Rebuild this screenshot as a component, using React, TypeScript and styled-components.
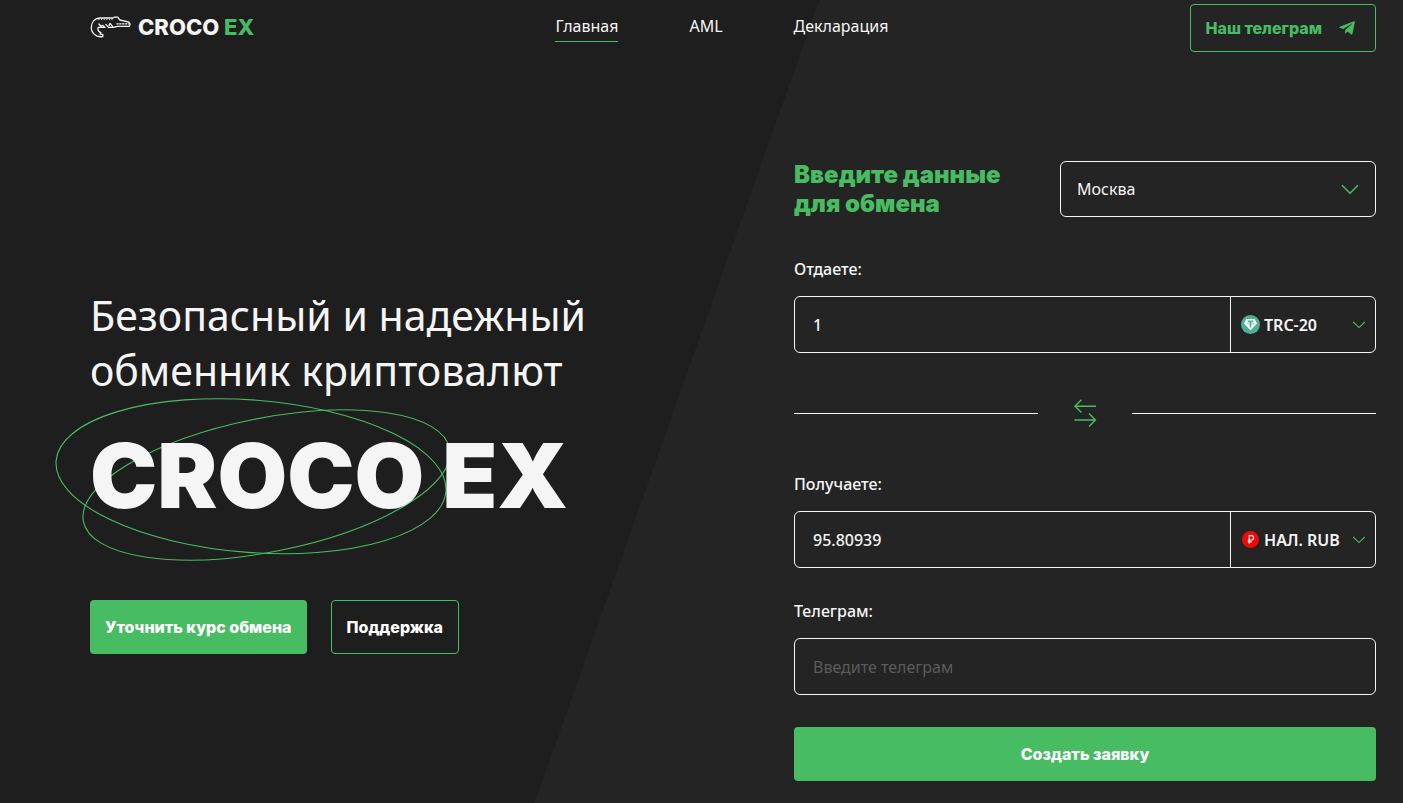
import React, { useState } from 'react';
import styled, { createGlobalStyle, css } from 'styled-components';
import { FaTelegramPlane } from 'react-icons/fa';

const green = '#47bc62';
const light = '#f5f5f5';
const dark = '#1e1e1e';
const panel = '#242424';
const displayFont = '"Inter", "Liberation Sans", sans-serif';
const bodyFont = '"Noto Sans", "Open Sans", sans-serif';

const GlobalStyle = createGlobalStyle`
  *, *::before, *::after { box-sizing: border-box; }
  body {
    margin: 0;
    background: ${dark};
    color: ${light};
    font-family: ${bodyFont};
    font-size: 16px;
    line-height: 24px;
  }
  button, input, select { font: inherit; color: inherit; }
`;

const Page = styled.div`
  min-height: 100vh;
  padding: 4px 27px 22px 90px;
  background: ${panel};
  position: relative;
  isolation: isolate;

  &::before {
    content: '';
    position: absolute;
    inset: 0;
    z-index: -1;
    background: ${dark};
    clip-path: polygon(0 0, 58.4% 0, 38.1% 100%, 0 100%);
  }
`;

const Header = styled.header`
  display: flex;
  align-items: center;
  justify-content: space-between;
  min-height: 48px;
`;

const Brand = styled.a`
  display: flex;
  align-items: center;
  gap: 7px;
  padding-bottom: 2px;
  color: ${light};
  font: 800 22px/28px ${displayFont};
  text-decoration: none;
`;

const Accent = styled.span`
  color: ${green};
`;

const Nav = styled.nav`
  display: flex;
  gap: 71px;
`;

const NavLink = styled.a<{ $active?: boolean }>`
  padding-bottom: 3px;
  color: ${light};
  text-decoration: none;
  border-bottom: 1px solid ${p => (p.$active ? green : 'transparent')};
`;

const buttonBase = css`
  display: inline-flex;
  align-items: center;
  justify-content: center;
  gap: 16px;
  border-radius: 4px;
  padding: 0 15px;
  font: 800 16px/24px ${displayFont};
  text-decoration: none;
  cursor: pointer;
`;

const PrimaryButton = styled.button`
  ${buttonBase}
  min-height: 54px;
  border: 0;
  background: ${green};
  color: #fff;
`;

const OutlineButton = styled.button`
  ${buttonBase}
  min-height: 54px;
  border: 1px solid ${green};
  background: transparent;
  color: #fff;
`;

const TelegramLink = styled.a`
  ${buttonBase}
  min-height: 48px;
  padding-right: 19px;
  border: 1px solid ${green};
  color: ${green};
`;

const Hero = styled.main`
  display: grid;
  grid-template-columns: 704fr 582fr;
  align-items: center;
  padding-top: 108px;
`;

const Intro = styled.section`
  display: flex;
  flex-direction: column;
  align-items: flex-start;
`;

const Lead = styled.p`
  margin: 0;
  font-size: 41px;
  line-height: 55px;
`;

const Title = styled.h1`
  position: relative;
  margin: 32px 0 78px;
  font: 900 90px/92px ${displayFont};
`;

const Rings = styled.svg`
  position: absolute;
  left: -36px;
  top: -34px;
  z-index: -1;
`;

const Actions = styled.div`
  display: flex;
  gap: 24px;
`;

const Form = styled.form`
  display: flex;
  flex-direction: column;
`;

const FormTop = styled.div`
  display: flex;
  align-items: center;
  justify-content: space-between;
  margin-bottom: 39px;
`;

const FormTitle = styled.h2`
  margin: 0;
  color: ${green};
  font: 900 24px/29px ${displayFont};
`;

const Label = styled.label`
  margin-bottom: 15px;
  font-weight: 500;
`;

const CitySelect = styled.div`
  position: relative;
  width: 316px;
`;

const Select = styled.select<{ $compact?: boolean }>`
  appearance: none;
  width: 100%;
  height: ${p => (p.$compact ? '100%' : '56px')};
  padding: ${p => (p.$compact ? '0 24px 0 33px' : '0 40px 0 16px')};
  border: ${p => (p.$compact ? '0' : `1px solid ${light}`)};
  border-radius: 6px;
  background: transparent;
  font-weight: ${p => (p.$compact ? 600 : 400)};
  outline: none;

  option { background: ${panel}; }
`;

const Chevron = styled.svg<{ $compact?: boolean }>`
  position: absolute;
  top: 0;
  bottom: 0;
  right: ${p => (p.$compact ? '9px' : '17px')};
  margin: auto 0;
  pointer-events: none;
`;

const CoinIcon = styled.svg`
  position: absolute;
  top: 0;
  bottom: 0;
  left: 10px;
  margin: auto 0;
  pointer-events: none;
`;

const Field = styled.div`
  display: flex;
  height: 57px;
  border: 1px solid ${light};
  border-radius: 6px;
`;

const Input = styled.input`
  flex: 1;
  min-width: 0;
  padding: 0 18px;
  border: 0;
  background: transparent;
  font-weight: 500;
  outline: none;

  &::placeholder { color: #5b5b5b; font-weight: 400; opacity: 1; }
`;

const Currency = styled.div`
  position: relative;
  width: 145px;
  border-left: 1px solid ${light};
`;

const SwapRow = styled.div`
  display: flex;
  align-items: center;
  gap: 35px;
  margin: 46px 0 45px;
`;

const Line = styled.span`
  flex: 1;
  height: 1px;
  background: ${light};
`;

const SwapButton = styled.button`
  display: flex;
  padding: 0;
  border: 0;
  background: transparent;
  cursor: pointer;
`;

const TelegramField = styled.div`
  display: flex;
  flex-direction: column;
  margin: 31px 0 32px;
`;

function Crocodile() {
  return (
    <svg width="41" height="22" viewBox="-0.5 -1 41 22" fill="none" stroke={light} strokeWidth="1.3" strokeLinejoin="round" strokeLinecap="round" aria-hidden="true">
      <path d="M12.2 19.6C6.5 20.6 .8 16.6 .8 10.6 .8 4.6 4.6 1.3 9.5 1H22.4L24.2 .2H27.2L29.4 3 38.6 5.2 39.6 7 38.8 9.4H27L22.6 10.4H18L15.4 7.4M12.2 19.6 12.4 17.6 9.6 17.2 10.4 15.6C8 15 7 12.6 7.6 10.4H14.4L12.4 8.4 10.4 9.2 8.4 7M22.6 10.4 19.6 6.4 18.6 8.4" />
      <path d="M26.4 6.8H38.2" strokeDasharray="1.4 1.4" strokeWidth="1.2" />
      <path d="M8.4 2.6H22" strokeDasharray=".2 2.4" strokeWidth="1" />
    </svg>
  );
}

function ChevronDown({ compact }: { compact?: boolean }) {
  return (
    <Chevron $compact={compact} width={compact ? 14 : 18} height={compact ? 8 : 11} viewBox={compact ? '0 0 14 8' : '0 0 18 11'} fill="none" stroke={green} strokeWidth={compact ? 1.1 : 1.6} aria-hidden="true">
      <path d={compact ? 'M1.2 1 7 6.6 12.8 1' : 'M1 1.2 9 9.2 17 1.2'} />
    </Chevron>
  );
}

function TetherIcon() {
  return (
    <CoinIcon width="19" height="19" viewBox="0 0 19 19" aria-hidden="true">
      <circle cx="9.5" cy="9.5" r="9.5" fill="#4fae94" />
      <path d="M5.4 4H13.6L16 8.6 9.5 15.2 3 8.6Z" fill="#fff" />
      <path d="M6.6 6.4H12.4M9.5 6.4V12.4" stroke="#4fae94" strokeWidth="1.6" fill="none" />
      <path d="M5.8 8.4C7.4 9.3 11.6 9.3 13.2 8.4" stroke="#4fae94" strokeWidth=".7" fill="none" />
    </CoinIcon>
  );
}

function RubleIcon() {
  return (
    <CoinIcon width="19" height="19" viewBox="0 0 19 19" aria-hidden="true">
      <circle cx="9.5" cy="9.5" r="8.5" fill="#ee0a0a" />
      <path d="M8.2 13.8V5.6H10.4A2.2 2.2 0 0 1 10.4 10H6.8M6.8 11.9H10.6" stroke="#fff" strokeWidth="1.1" fill="none" />
    </CoinIcon>
  );
}

export default function App() {
  const [give, setGive] = useState('1');
  const [receive, setReceive] = useState('95.80939');
  const [telegram, setTelegram] = useState('');

  return (
    <>
      <GlobalStyle />
      <Page>
        <Header>
          <Brand href="#">
            <Crocodile />
            <span>CROCO <Accent>EX</Accent></span>
          </Brand>
          <Nav>
            <NavLink href="#" $active>Главная</NavLink>
            <NavLink href="#aml">AML</NavLink>
            <NavLink href="#declaration">Декларация</NavLink>
          </Nav>
          <TelegramLink href="#telegram">
            Наш телеграм
            <FaTelegramPlane size={18} aria-hidden="true" />
          </TelegramLink>
        </Header>

        <Hero>
          <Intro>
            <Lead>Безопасный и надежный<br />обменник криптовалют</Lead>
            <Title>
              CROCO EX
              <Rings width="398" height="168" viewBox="54 396 398 168" fill="none" stroke={green} strokeWidth="1.1" aria-hidden="true">
                <ellipse cx="251" cy="476.2" rx="195.5" ry="76.2" transform="rotate(4.5 251 476.2)" />
                <ellipse cx="266.5" cy="485" rx="186.7" ry="66.8" transform="rotate(-11.3 266.5 485)" />
              </Rings>
            </Title>
            <Actions>
              <PrimaryButton type="button">Уточнить курс обмена</PrimaryButton>
              <OutlineButton type="button">Поддержка</OutlineButton>
            </Actions>
          </Intro>

          <Form onSubmit={e => e.preventDefault()}>
            <FormTop>
              <FormTitle>Введите данные<br />для обмена</FormTitle>
              <CitySelect>
                <Select aria-label="Город" defaultValue="Москва">
                  <option>Москва</option>
                </Select>
                <ChevronDown />
              </CitySelect>
            </FormTop>

            <Label htmlFor="give">Отдаете:</Label>
            <Field>
              <Input id="give" inputMode="decimal" value={give} onChange={e => setGive(e.target.value)} />
              <Currency>
                <TetherIcon />
                <Select $compact aria-label="Валюта отправки" defaultValue="TRC-20">
                  <option>TRC-20</option>
                </Select>
                <ChevronDown compact />
              </Currency>
            </Field>

            <SwapRow>
              <Line />
              <SwapButton type="button" aria-label="Поменять местами">
                <svg width="24" height="28" viewBox="0 0 24 28" fill="none" stroke={green} strokeWidth="1.4" aria-hidden="true">
                  <path d="M23 7.2H2M8.4 .8 2 7.2 8.4 13.6M1.4 21H22.4M16 14.6 22.4 21 16 27.4" />
                </svg>
              </SwapButton>
              <Line />
            </SwapRow>

            <Label htmlFor="receive">Получаете:</Label>
            <Field>
              <Input id="receive" inputMode="decimal" value={receive} onChange={e => setReceive(e.target.value)} />
              <Currency>
                <RubleIcon />
                <Select $compact aria-label="Валюта получения" defaultValue="НАЛ. RUB">
                  <option>НАЛ. RUB</option>
                </Select>
                <ChevronDown compact />
              </Currency>
            </Field>

            <TelegramField>
              <Label htmlFor="telegram">Телеграм:</Label>
              <Field>
                <Input id="telegram" placeholder="Введите телеграм" value={telegram} onChange={e => setTelegram(e.target.value)} />
              </Field>
            </TelegramField>

            <PrimaryButton type="submit">Создать заявку</PrimaryButton>
          </Form>
        </Hero>
      </Page>
    </>
  );
}
